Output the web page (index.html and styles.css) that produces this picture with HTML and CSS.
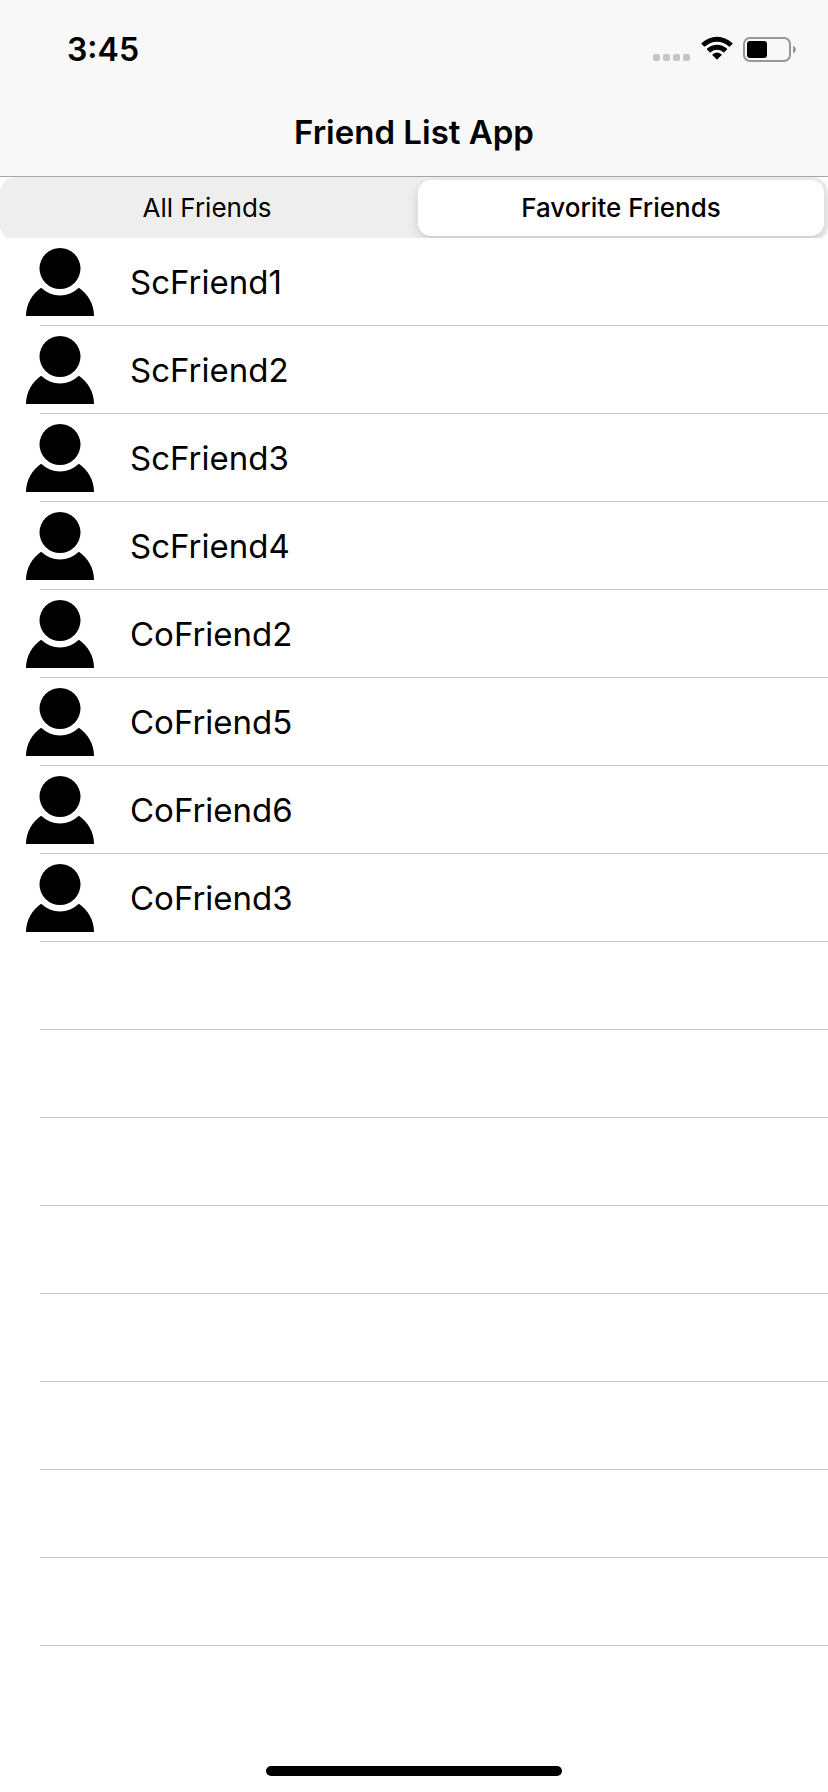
FILE: index.html
```html
<!DOCTYPE html>
<html lang="en">
<head>
<meta charset="utf-8">
<meta name="viewport" content="width=device-width, initial-scale=1">
<title>Friend List App</title>
<link rel="stylesheet" href="styles.css">
</head>
<body>
<svg class="symbols" aria-hidden="true">
  <symbol id="person" viewBox="0 0 68 68">
    <circle cx="34" cy="20.5" r="20.5"/>
    <path d="M0 68A34 34 0 0 1 15.2 39.8A27 27 0 0 0 52.8 39.8A34 34 0 0 1 68 68Z"/>
  </symbol>
</svg>
<div class="app">
  <header class="header">
    <div class="status">
      <span class="time">3:45</span>
      <div class="status-icons">
        <svg class="signal" viewBox="0 0 38 32" aria-hidden="true">
          <rect x="0" y="20" width="7" height="7" rx="2"/><rect x="10" y="20" width="7" height="7" rx="2"/><rect x="20" y="20" width="7" height="7" rx="2"/><rect x="30" y="20" width="7" height="7" rx="2"/>
        </svg>
        <svg class="wifi" viewBox="0 0 32 32" aria-hidden="true">
          <path d="M0.6 9.9Q0.2 9.4 0.7 8.9A22.4 22.4 0 0 1 31.3 8.9Q31.8 9.4 31.4 9.9L28.9 12.4Q28.4 12.8 27.9 12.4A17.4 17.4 0 0 0 4.1 12.4Q3.6 12.8 3.1 12.4Z"/>
          <path d="M6 15.6Q5.6 15.1 6.1 14.6A14.6 14.6 0 0 1 25.9 14.6Q26.4 15.1 26 15.6L23.3 18.2Q22.8 18.6 22.3 18.2A9.4 9.4 0 0 0 9.7 18.2Q9.2 18.6 8.7 18.2Z"/>
          <path d="M11.6 21.2Q11.2 20.7 11.7 20.2A7 7 0 0 1 20.3 20.2Q20.8 20.7 20.4 21.2L16.5 25.2Q16 25.6 15.5 25.2Z"/>
        </svg>
        <svg class="battery" viewBox="0 0 54 32" aria-hidden="true">
          <rect class="battery-case" x="1" y="4" width="46" height="23" rx="6"/>
          <rect x="4" y="7" width="20" height="17" rx="3"/>
          <path class="battery-cap" d="M50 11.5Q53 13 53 15.5T50 19.5Z"/>
        </svg>
      </div>
    </div>
    <h1 class="title">Friend List App</h1>
  </header>
  <main class="content">
    <div class="segments-clip">
      <div class="segments" role="tablist">
        <button class="segment" type="button" role="tab" aria-selected="false">All Friends</button>
        <button class="segment selected" type="button" role="tab" aria-selected="true">Favorite Friends</button>
      </div>
    </div>
    <ul class="friends">
      <li class="row"><svg class="avatar" aria-hidden="true"><use href="#person"/></svg><span>ScFriend1</span></li>
      <li class="row"><svg class="avatar" aria-hidden="true"><use href="#person"/></svg><span>ScFriend2</span></li>
      <li class="row"><svg class="avatar" aria-hidden="true"><use href="#person"/></svg><span>ScFriend3</span></li>
      <li class="row"><svg class="avatar" aria-hidden="true"><use href="#person"/></svg><span>ScFriend4</span></li>
      <li class="row"><svg class="avatar" aria-hidden="true"><use href="#person"/></svg><span>CoFriend2</span></li>
      <li class="row"><svg class="avatar" aria-hidden="true"><use href="#person"/></svg><span>CoFriend5</span></li>
      <li class="row"><svg class="avatar" aria-hidden="true"><use href="#person"/></svg><span>CoFriend6</span></li>
      <li class="row"><svg class="avatar" aria-hidden="true"><use href="#person"/></svg><span>CoFriend3</span></li>
      <li class="row"></li>
      <li class="row"></li>
      <li class="row"></li>
      <li class="row"></li>
      <li class="row"></li>
      <li class="row"></li>
      <li class="row"></li>
      <li class="row"></li>
    </ul>
  </main>
  <div class="home-indicator"></div>
</div>
</body>
</html>
```
FILE: styles.css
```css
* {
  box-sizing: border-box;
}

body {
  margin: 0;
  background: #fff;
  color: #000;
  font-family: Inter, "Liberation Sans", sans-serif;
}

.symbols {
  display: none;
}

.app {
  display: flex;
  flex-direction: column;
  min-height: 100vh;
}

.header {
  background: #f8f8f8;
  border-bottom: 1px solid #a6a6a6;
}

.status {
  display: flex;
  align-items: center;
  justify-content: space-between;
  height: 88px;
  padding: 12px 31px 0 67px;
}

.time {
  font-size: 32px;
  font-weight: 600;
  line-height: 32px;
}

.status-icons {
  display: flex;
  gap: 10px;
}

.status-icons svg {
  height: 32px;
}

.signal {
  width: 38px;
  fill: #c6c6c6;
}

.wifi {
  width: 32px;
}

.battery {
  width: 54px;
}

.battery-case {
  fill: none;
  stroke: #979797;
  stroke-width: 2;
}

.battery-cap {
  fill: #979797;
}

.title {
  margin: 0;
  font-size: 33px;
  font-weight: 600;
  line-height: 88px;
  text-align: center;
}

.content {
  flex: 1;
}

.segments-clip {
  height: 61px;
  overflow: hidden;
}

.segments {
  display: grid;
  grid-template-columns: 1fr 1fr;
  gap: 8px;
  height: 64px;
  padding: 3px 4px 5px;
  border-radius: 16px;
  background: #eee;
}

.segment {
  border: 0;
  border-radius: 13px;
  padding: 0;
  background: transparent;
  color: inherit;
  font: 400 26px/56px Inter, "Liberation Sans", sans-serif;
}

.segment.selected {
  background: #fff;
  font-weight: 500;
  box-shadow: 0 4px 12px rgba(0, 0, 0, 0.12), 0 2px 2px rgba(0, 0, 0, 0.04);
}

.friends {
  list-style: none;
  margin: 0;
  padding: 0;
}

.row {
  display: flex;
  align-items: center;
  gap: 36px;
  height: 88px;
  padding-left: 26px;
  font-size: 33px;
  background: linear-gradient(#c6c6c8, #c6c6c8) 40px 100% / 100% 1px no-repeat;
}

.avatar {
  width: 68px;
  height: 68px;
}

.home-indicator {
  align-self: center;
  width: 296px;
  height: 10px;
  margin: 16px 0;
  border-radius: 5px;
  background: #000;
}
```
